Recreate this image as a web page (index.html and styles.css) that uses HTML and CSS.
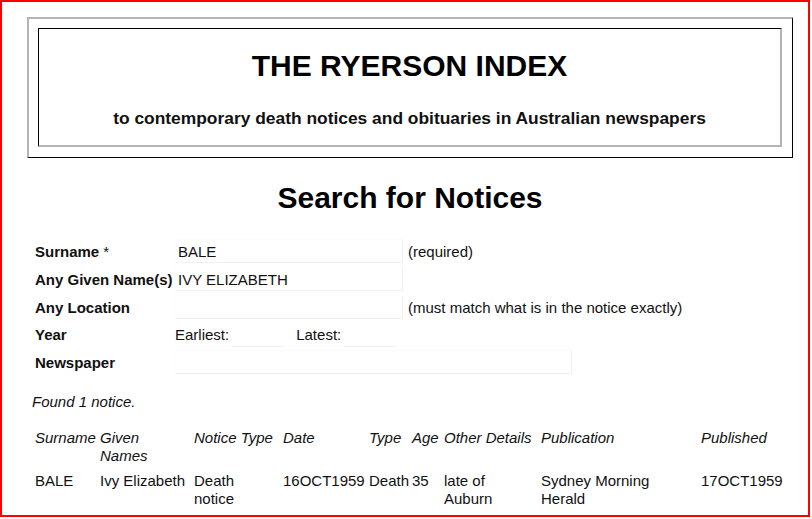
FILE: index.html
```html
<!DOCTYPE html>
<html>
<head>
<meta charset="utf-8">
<title>The Ryerson Index - Search for Notices</title>
<link rel="stylesheet" href="styles.css">
</head>
<body>
<div class="frame">
  <div class="masthead">
    <div class="masthead-inner">
      <h1 class="title">THE RYERSON INDEX</h1>
      <p class="subtitle">to contemporary death notices and obituaries in Australian newspapers</p>
    </div>
  </div>

  <h2 class="page-title">Search for Notices</h2>

  <form class="search">
    <div class="row">
      <label class="label">Surname <span class="req">*</span></label>
      <input class="field field-name" type="text" value="BALE">
      <span class="hint">(required)</span>
    </div>
    <div class="row">
      <label class="label">Any Given Name(s)</label>
      <input class="field field-name" type="text" value="IVY ELIZABETH">
    </div>
    <div class="row">
      <label class="label">Any Location</label>
      <input class="field field-name" type="text" value="">
      <span class="hint">(must match what is in the notice exactly)</span>
    </div>
    <div class="row row-year">
      <label class="label">Year</label>
      <span class="sub-label">Earliest:</span>
      <input class="field field-year" type="text" value="">
      <span class="sub-label sub-latest">Latest:</span>
      <input class="field field-year" type="text" value="">
    </div>
    <div class="row">
      <label class="label">Newspaper</label>
      <span class="field field-paper"></span>
    </div>
  </form>

  <p class="found">Found 1 notice.</p>

  <table class="results">
    <colgroup>
      <col class="c-surname">
      <col class="c-given">
      <col class="c-ntype">
      <col class="c-date">
      <col class="c-type">
      <col class="c-age">
      <col class="c-other">
      <col class="c-pub">
      <col class="c-published">
    </colgroup>
    <thead>
      <tr>
        <th>Surname</th>
        <th>Given Names</th>
        <th>Notice Type</th>
        <th>Date</th>
        <th>Type</th>
        <th>Age</th>
        <th>Other Details</th>
        <th>Publication</th>
        <th>Published</th>
      </tr>
    </thead>
    <tbody>
      <tr>
        <td>BALE</td>
        <td>Ivy Elizabeth</td>
        <td>Death notice</td>
        <td>16OCT1959</td>
        <td>Death</td>
        <td>35</td>
        <td>late of Auburn</td>
        <td>Sydney Morning Herald</td>
        <td>17OCT1959</td>
      </tr>
    </tbody>
  </table>
</div>
</body>
</html>
```
FILE: styles.css
```css
html, body {
  margin: 0;
  padding: 0;
  background: #fff;
}

body {
  font-family: "Liberation Sans", Arial, sans-serif;
  color: #111;
  font-size: 15px;
}

.frame {
  width: 806px;
  height: 513px;
  border: 2px solid #f00;
  overflow: hidden;
}

/* two nested boxes around the site name */
.masthead {
  box-sizing: border-box;
  width: 766px;
  height: 141px;
  margin: 15px 0 0 25px;
  padding: 9px 10px 9px 9px;
  border-style: solid;
  border-width: 2px 1px 1px 2px;
  border-color: #b4b4b4 #000 #000 #b4b4b4;
}

.masthead-inner {
  box-sizing: border-box;
  height: 119px;
  border-style: solid;
  border-width: 1px 2px 2px 1px;
  border-color: #000 #b4b4b4 #b4b4b4 #000;
  text-align: center;
  padding-top: 20px;
}

.title {
  margin: 0;
  font-size: 30px;
  line-height: 34px;
  font-weight: bold;
  color: #000;
}

.subtitle {
  margin: 25px 0 0;
  font-size: 17.4px;
  line-height: 20px;
  font-weight: bold;
  color: #111;
}

.page-title {
  margin: 23px 0 0;
  padding-left: 10px;
  text-align: center;
  font-size: 30px;
  line-height: 34px;
  font-weight: bold;
  color: #000;
}

.search {
  margin: 24px 0 0 33px;
  display: flex;
  flex-direction: column;
  gap: 4px;
}

.row {
  display: flex;
  align-items: center;
  height: 24px;
}

.row-year {
  height: 23px;
}

.label {
  width: 140px;
  font-weight: bold;
  font-size: 15px;
}

.req {
  font-weight: normal;
}

.field {
  box-sizing: border-box;
  height: 24px;
  margin: 0;
  padding: 0 2px;
  font-family: "Liberation Sans", Arial, sans-serif;
  font-size: 15px;
  color: #111;
  background: #fff;
  border-style: solid;
  border-width: 1px;
  border-color: #fcfcfc #f0f0f0 #f0f0f0 #fcfcfc;
  outline: none;
}

.field-name {
  width: 228px;
}

.field-year {
  width: 52px;
  height: 20px;
  margin: 4px 0 0 3px;
  border-color: #fff #fff #f0f0f0 #fff;
}

.field-paper {
  display: block;
  width: 397px;
}

.sub-label {
  font-size: 15px;
}

.sub-latest {
  margin-left: 12px;
}

.hint {
  margin-left: 5px;
  font-size: 15px;
}

.found {
  margin: 19px 0 0 30px;
  font-style: italic;
  font-size: 15px;
}

.results {
  margin: 19px 0 0 33px;
  border-collapse: collapse;
  table-layout: fixed;
  width: 760px;
  font-size: 15px;
  line-height: 18px;
}

.results th,
.results td {
  padding: 0 7px 0 0;
  text-align: left;
  vertical-align: top;
}

.results th {
  font-weight: normal;
  font-style: italic;
  padding-bottom: 7px;
}

.c-surname { width: 65px; }
.c-given { width: 94px; }
.c-ntype { width: 89px; }
.c-date { width: 86px; }
.c-type { width: 43px; }
.c-age { width: 32px; }
.c-other { width: 97px; }
.c-pub { width: 160px; }
.c-published { width: 94px; }
```
